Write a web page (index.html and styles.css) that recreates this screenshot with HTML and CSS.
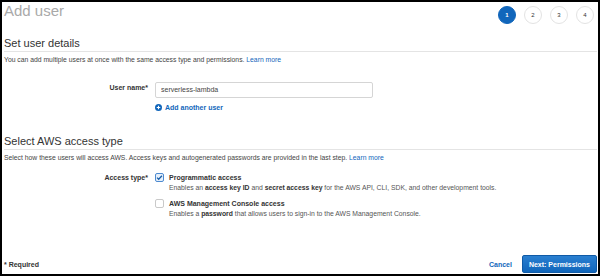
FILE: index.html
```html
<!DOCTYPE html>
<html lang="en">
<head>
  <meta charset="UTF-8">
  <title>Add user</title>
  <link rel="stylesheet" href="styles.css">
</head>
<body>
  <div class="frame">
    <div class="header">
      <h1>Add user</h1>
      <ol class="steps">
        <li class="active">1</li>
        <li>2</li>
        <li>3</li>
        <li>4</li>
      </ol>
    </div>

    <h2>Set user details</h2>
    <p class="desc">You can add multiple users at once with the same access type and permissions. <a href="#">Learn more</a></p>

    <div class="row row-user">
      <label class="label">User name*</label>
      <div class="control">
        <input class="text-input" type="text" value="serverless-lambda">
      </div>
    </div>
    <div class="row">
      <span></span>
      <a href="#" class="add-link">
        <svg width="7" height="7" viewBox="0 0 14 14"><circle cx="7" cy="7" r="7" fill="#1166bb"/><path d="M7 3.5v7M3.5 7h7" stroke="#fff" stroke-width="2.2"/></svg>
        Add another user
      </a>
    </div>

    <h2 class="second">Select AWS access type</h2>
    <p class="desc">Select how these users will access AWS. Access keys and autogenerated passwords are provided in the last step. <a href="#">Learn more</a></p>

    <div class="row row-access">
      <label class="label">Access type*</label>
      <div class="options">
        <div class="option">
          <span class="check checked">
            <svg width="7" height="7" viewBox="0 0 10 10"><path d="M1.5 5.2l2.3 2.3 4.7-5" fill="none" stroke="#1a5fa8" stroke-width="1.8"/></svg>
          </span>
          <div>
            <div class="opt-title">Programmatic access</div>
            <div class="opt-desc">Enables an <b>access key ID</b> and <b>secret access key</b> for the AWS API, CLI, SDK, and other development tools.</div>
          </div>
        </div>
        <div class="option">
          <span class="check"></span>
          <div>
            <div class="opt-title">AWS Management Console access</div>
            <div class="opt-desc">Enables a <b>password</b> that allows users to sign-in to the AWS Management Console.</div>
          </div>
        </div>
      </div>
    </div>

    <div class="footer">
      <span class="required">* Required</span>
      <div class="actions">
        <a href="#" class="cancel">Cancel</a>
        <button class="next">Next: Permissions</button>
      </div>
    </div>
  </div>
</body>
</html>
```

FILE: styles.css
```css
html, body {
  margin: 0;
  padding: 0;
}
body {
  font-family: "Liberation Sans", Arial, sans-serif;
  background: #fff;
  color: #444;
}
.frame {
  width: 600px;
  height: 276px;
  box-sizing: border-box;
  border: 2px solid #000;
  padding: 0 1px 1px 2px;
  display: flex;
  flex-direction: column;
}
.header {
  display: flex;
  justify-content: space-between;
  align-items: flex-start;
  height: 34px;
}
h1 {
  margin: 0;
  font-size: 15px;
  line-height: 17px;
  font-weight: normal;
  color: #a9a9a9;
}
.steps {
  list-style: none;
  margin: 4px 3px 0 0;
  padding: 0;
  display: flex;
  gap: 8px;
}
.steps li {
  width: 16px;
  height: 16px;
  border: 1px solid #e3e3e3;
  border-radius: 50%;
  font-size: 6px;
  line-height: 16px;
  text-align: center;
  color: #333;
  background: #fff;
}
.steps li.active {
  background: #1166bb;
  border-color: #1166bb;
  color: #fff;
  font-weight: bold;
}
h2 {
  margin: 0;
  font-size: 11px;
  line-height: 14px;
  font-weight: normal;
  color: #333;
  padding-bottom: 1px;
  border-bottom: 1px solid #e4e4e4;
}
h2.second {
  margin-top: 22px;
}
.desc {
  margin: 3px 0 0;
  font-size: 6.8px;
  line-height: 9px;
  color: #444;
}
a {
  color: #1166bb;
  text-decoration: none;
}
.row {
  display: grid;
  grid-template-columns: 144px 1fr;
  column-gap: 7px;
  margin-top: 5px;
}
.row-user {
  margin-top: 14px;
  align-items: center;
}
.row-access {
  margin-top: 11px;
}
.label {
  text-align: right;
  font-size: 7px;
  line-height: 9px;
  font-weight: bold;
  color: #333;
}
.text-input {
  width: 218px;
  height: 16px;
  box-sizing: border-box;
  border: 1px solid #d5d5d5;
  border-radius: 2px;
  padding: 0 5px;
  font-family: inherit;
  font-size: 7px;
  color: #444;
  outline: none;
}
.add-link {
  display: flex;
  align-items: center;
  gap: 3px;
  font-size: 7px;
  line-height: 9px;
  font-weight: bold;
}
.options {
  display: flex;
  flex-direction: column;
  gap: 7px;
}
.option {
  display: flex;
  gap: 5px;
  font-size: 6.8px;
  line-height: 9px;
}
.check {
  width: 9px;
  height: 9px;
  box-sizing: border-box;
  border: 1px solid #c9c9c9;
  border-radius: 2px;
  background: #fff;
  display: flex;
  align-items: center;
  justify-content: center;
  flex-shrink: 0;
}
.check.checked {
  border-color: #4d8ad0;
  background: #e6f0fb;
}
.opt-title {
  font-size: 7px;
  font-weight: bold;
  color: #333;
}
.opt-desc {
  margin-top: 1px;
  color: #555;
}
.opt-desc b {
  color: #333;
}
.footer {
  margin-top: auto;
  display: flex;
  justify-content: space-between;
  align-items: center;
}
.required {
  font-size: 7px;
  font-weight: bold;
  color: #333;
}
.actions {
  display: flex;
  align-items: center;
  gap: 10px;
}
.cancel {
  font-size: 7px;
  font-weight: bold;
}
.next {
  height: 18px;
  padding: 0 6px;
  border: 1px solid #0f5aa6;
  border-radius: 2px;
  background: linear-gradient(#2a7fd0, #1166bb);
  color: #fff;
  font-family: inherit;
  font-size: 7px;
  font-weight: bold;
}
```
